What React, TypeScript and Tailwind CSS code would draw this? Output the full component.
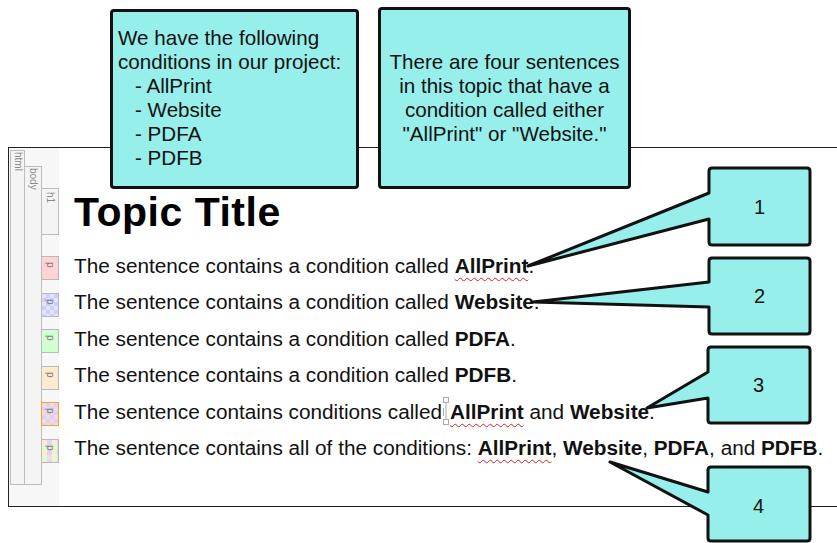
import React from "react";

const FILL = "#97efeb";

const pBoxes = [
  "bg-[#ffd3d3] border-[#b9b9b9]",
  "bg-[repeating-conic-gradient(#cfcfff_0_25%,#e3e3ff_0_50%)] bg-[length:8px_8px] border-[#b9b9b9]",
  "bg-[#d2ffd2] border-[#b9b9b9]",
  "bg-[#ffe9cf] border-[#b9b9b9]",
  "bg-[repeating-conic-gradient(#d3d3ff_0_25%,#ffd6d6_0_50%)] bg-[length:8px_8px] border-[#f5a623]",
  "bg-[repeating-conic-gradient(#d6d6ff_0_25%,#ffd8d8_0_50%,#d6ffd6_0_75%,#ffeacc_0_100%)] bg-[length:10px_10px] border-[#b9b9b9]",
];

const Bold = ({ children, squiggle }: { children: React.ReactNode; squiggle?: boolean }) => (
  <b
    className={
      squiggle
        ? "font-bold underline decoration-wavy decoration-[#e02020] decoration-1 underline-offset-[4px]"
        : "font-bold"
    }
  >
    {children}
  </b>
);

const Marker = () => (
  <svg width="8" height="30" viewBox="0 0 8 30" className="inline-block align-middle -mt-[4px]">
    <rect x="1.5" y="1.5" width="5" height="5" fill="white" stroke="#aaa" />
    <line x1="4" y1="6.5" x2="4" y2="23.5" stroke="#aaa" />
    <line x1="1.5" y1="12" x2="1.5" y2="20" stroke="#aaa" />
    <rect x="1.5" y="23.5" width="5" height="5" fill="white" stroke="#aaa" />
  </svg>
);

const callouts = [
  { n: "1", d: "M712,168 H807 Q810,168 810,171 V242 Q810,245 807,245 H712 Q709,245 709,242 V219 L528,266 L709,193 V171 Q709,168 712,168 Z", x: 709, y: 168, h: 77 },
  { n: "2", d: "M712,258 H807 Q810,258 810,261 V331 Q810,334 807,334 H712 Q709,334 709,331 V307 L533,302 L709,282 V261 Q709,258 712,258 Z", x: 709, y: 258, h: 76 },
  { n: "3", d: "M711,347 H807 Q810,347 810,350 V420 Q810,423 807,423 H711 Q708,423 708,420 V398 L647,408 L708,372 V350 Q708,347 711,347 Z", x: 708, y: 347, h: 76 },
  { n: "4", d: "M711,467 H807 Q810,467 810,470 V538 Q810,541 807,541 H711 Q708,541 708,538 V515 L610,462 L708,492 V470 Q708,467 711,467 Z", x: 708, y: 467, h: 78 },
];

export default function App() {
  return (
    <div className="relative w-[837px] h-[543px] overflow-hidden bg-white font-['Liberation_Sans',Arial,sans-serif] text-[#111]">
      <div className="pt-[147px] pl-[8px]">
        <div className="flex w-[840px] h-[360px] border-l border-t border-b border-[#222]">
          <div className="flex w-[50px] bg-[#f7f7f7] pl-px">
            <div className="mt-[2px] w-[15px] h-[335px] border border-[#bdbdbd] bg-[#f4f4f4] flex justify-center">
              <span className="[writing-mode:vertical-rl] text-[10px] leading-[14px] text-[#8a8a8a] pt-[1px]">html</span>
            </div>
            <div className="-ml-px mt-[18px] w-[18px] h-[319px] border border-[#bdbdbd] bg-[#f4f4f4] flex justify-center">
              <span className="[writing-mode:vertical-rl] text-[10px] leading-[16px] text-[#8a8a8a] pt-[1px]">body</span>
            </div>
            <div className="-ml-px flex flex-col">
              <div className="mt-[40px] w-[18px] h-[47px] border border-[#bdbdbd] bg-[#f4f4f4] flex justify-center">
                <span className="[writing-mode:vertical-rl] text-[10px] leading-[16px] text-[#8a8a8a] pt-[3px]">h1</span>
              </div>
              <div className="mt-[21px] flex flex-col gap-[12.5px]">
                {pBoxes.map((c, i) => (
                  <div key={i} className={`w-[18px] h-[24px] border flex justify-center ${c}`}>
                    <span className="[writing-mode:vertical-rl] text-[10px] leading-[16px] text-[#777] pt-[5px]">p</span>
                  </div>
                ))}
              </div>
            </div>
          </div>
          <div className="flex-1 pl-[15px]">
            <h1 className="mt-[44px] text-[41px] leading-[40px] tracking-[0.5px] font-bold text-black">Topic Title</h1>
            <div className="mt-[15.5px] text-[20.75px] leading-[36.5px]">
              <p>The sentence contains a condition called <Bold squiggle>AllPrint</Bold>.</p>
              <p>The sentence contains a condition called <Bold>Website</Bold>.</p>
              <p>The sentence contains a condition called <Bold>PDFA</Bold>.</p>
              <p>The sentence contains a condition called <Bold>PDFB</Bold>.</p>
              <p>
                The sentence contains conditions called<Marker />
                <Bold squiggle>AllPrint</Bold> and <Bold>Website</Bold>.
              </p>
              <p>
                The sentence contains all of the conditions: <Bold squiggle>AllPrint</Bold>, <Bold>Website</Bold>,{" "}
                <Bold>PDFA</Bold>, and <Bold>PDFB</Bold>.
              </p>
            </div>
          </div>
        </div>
      </div>

      {/* top notes */}
      <div className="absolute left-[110px] top-[9px] w-[249px] h-[180px] rounded-[4px] border-[3px] border-[#111] bg-[#97efeb] pt-[14px] pl-[5px] text-[20.6px] leading-[24px] text-[#111]">
        <div>We have the following</div>
        <div>conditions in our project:</div>
        <div className="pl-[17px]">- AllPrint</div>
        <div className="pl-[17px]">- Website</div>
        <div className="pl-[17px]">- PDFA</div>
        <div className="pl-[17px]">- PDFB</div>
      </div>
      <div className="absolute left-[378px] top-[7px] w-[253px] h-[182px] rounded-[4px] border-[3px] border-[#111] bg-[#97efeb] flex items-center justify-center text-center text-[20.6px] leading-[24px] text-[#111]">
        <div>
          There are four sentences
          <br />
          in this topic that have a
          <br />
          condition called either
          <br />
          "AllPrint" or "Website."
        </div>
      </div>

      {/* numbered callouts */}
      <svg className="absolute left-0 top-0 pointer-events-none" width="837" height="543" viewBox="0 0 837 543">
        {callouts.map((c) => (
          <path key={c.n} d={c.d} fill={FILL} stroke="#111" strokeWidth="3" strokeLinejoin="round" />
        ))}
      </svg>
      {callouts.map((c) => (
        <div
          key={c.n}
          className="absolute w-[101px] flex items-center justify-center text-[20px] text-[#111]"
          style={{ left: c.x, top: c.y, height: c.h }}
        >
          {c.n}
        </div>
      ))}
    </div>
  );
}
